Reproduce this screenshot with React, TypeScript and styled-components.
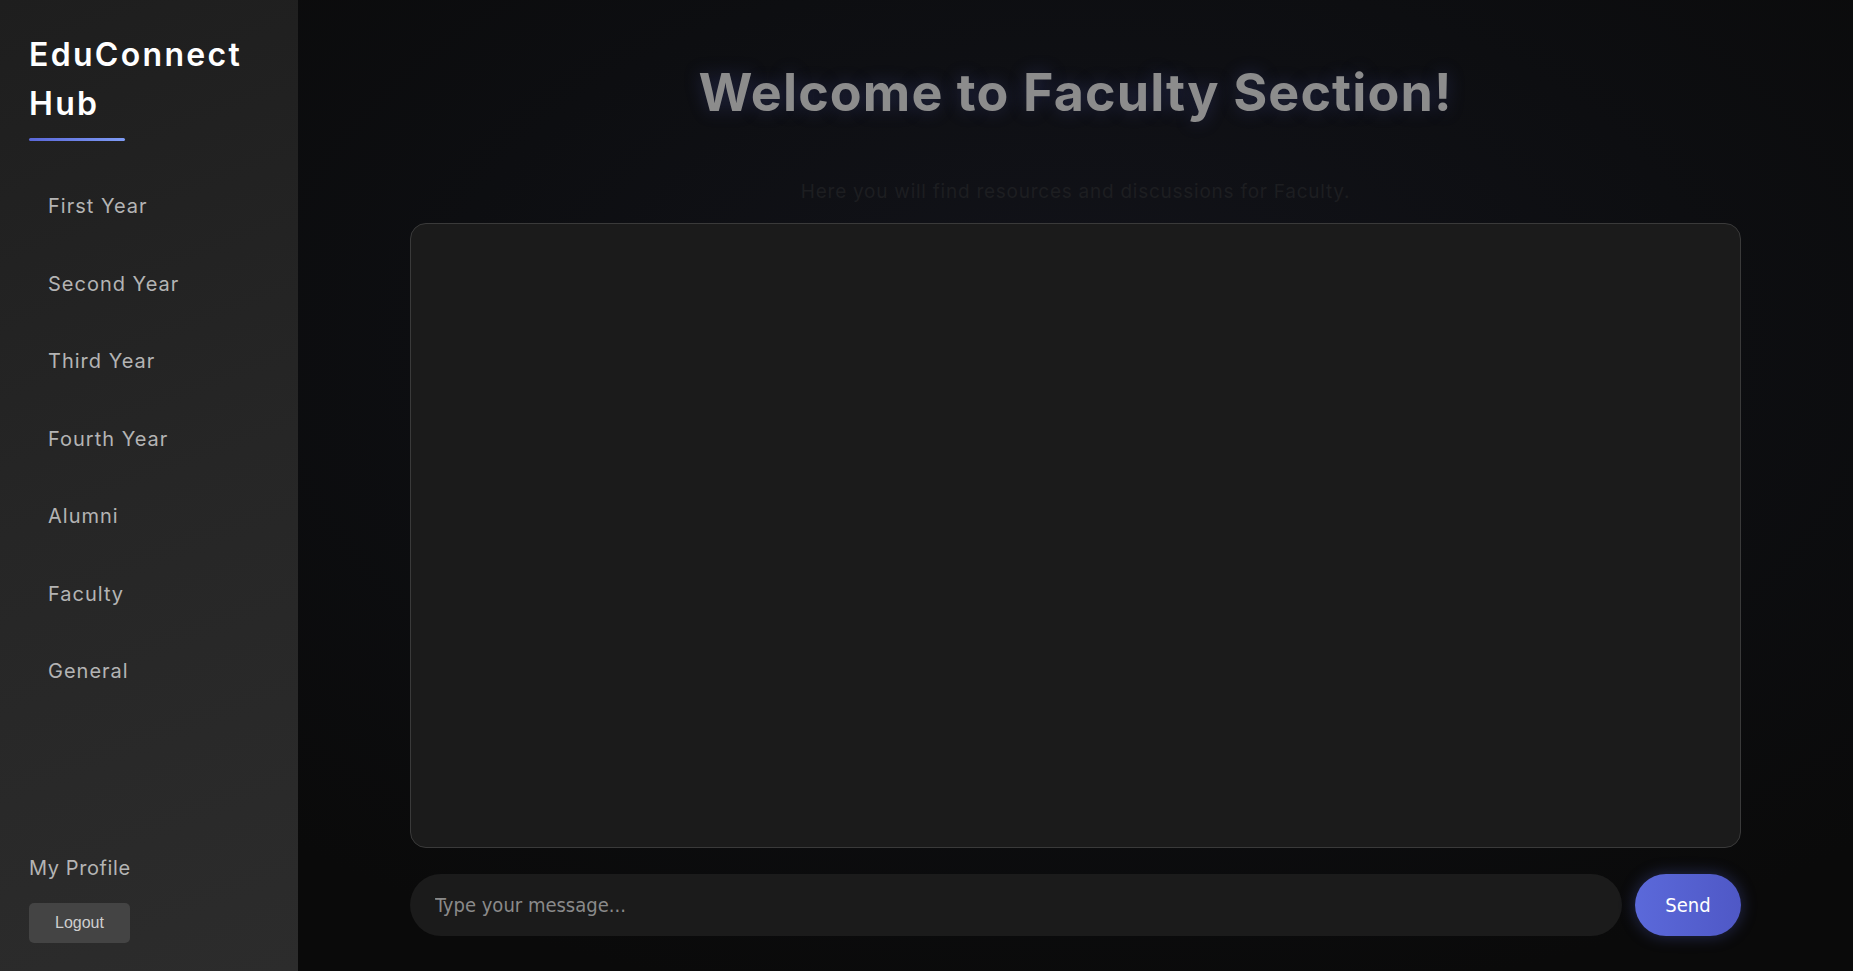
import React from "react";
import styled, { createGlobalStyle } from "styled-components";

const GlobalStyle = createGlobalStyle`
  html, body {
    margin: 0;
    padding: 0;
    height: 100%;
    background: #0b0b0d;
    overflow: hidden;
  }
  #root { height: 100%; }
  * { box-sizing: border-box; }
`;

const Layout = styled.div`
  display: flex;
  width: 100%;
  height: 100vh;
  font-family: Inter, "Noto Sans", sans-serif;
`;

const Sidebar = styled.aside`
  width: 298px;
  flex-shrink: 0;
  display: flex;
  flex-direction: column;
  justify-content: space-between;
  padding: 30px 29px 28px 29px;
  background: linear-gradient(160deg, #1e1e1e 0%, #262626 50%, #2c2c2c 100%);
`;

const Brand = styled.div`
  margin-bottom: 27px;
`;

const BrandTitle = styled.h1`
  margin: 0;
  max-width: 240px;
  font-family: Inter, "Noto Sans", sans-serif;
  font-size: 32px;
  line-height: 49px;
  font-weight: 600;
  letter-spacing: 2.3px;
  color: #ffffff;
`;

const BrandLine = styled.div`
  width: 96px;
  height: 3px;
  margin-top: 10px;
  border-radius: 2px;
  background: linear-gradient(90deg, #5a67d8, #7f9cf5);
`;

const NavList = styled.nav`
  display: flex;
  flex-direction: column;
`;

const NavItem = styled.a`
  display: block;
  padding: 26px 19px;
  font-size: 20px;
  line-height: 25.5px;
  letter-spacing: 1px;
  color: #b4b4b4;
  text-decoration: none;
  cursor: pointer;
`;

const SidebarTop = styled.div`
  display: flex;
  flex-direction: column;
`;

const SidebarBottom = styled.div`
  display: flex;
  flex-direction: column;
  align-items: flex-start;
  gap: 22px;
`;

const ProfileLink = styled.div`
  font-size: 20px;
  line-height: 25px;
  letter-spacing: 0.6px;
  color: #b4b4b4;
`;

const LogoutButton = styled.button`
  height: 40px;
  padding: 0 26px;
  border: none;
  border-radius: 5px;
  background: #444444;
  color: #cfcfcf;
  font-family: "Liberation Sans", Arial, sans-serif;
  font-size: 16px;
  cursor: pointer;
`;

const Main = styled.main`
  flex: 1;
  display: flex;
  flex-direction: column;
  align-items: center;
  padding-top: 62px;
  background: radial-gradient(ellipse 75% 70% at 50% 35%, #12131a 0%, #0d0e11 55%, #0a0a0a 100%);
`;

const Title = styled.h2`
  margin: 0;
  font-family: Inter, "Noto Sans", sans-serif;
  font-size: 52px;
  line-height: 62px;
  font-weight: 700;
  letter-spacing: 1.1px;
  color: #8c8c8c;
  text-shadow: 0 0 18px rgba(90, 103, 216, 0.25);
`;

const Subtitle = styled.p`
  margin: 54px 0 0 0;
  font-size: 19px;
  line-height: 28px;
  letter-spacing: 0.75px;
  color: #1d1e21;
`;

const ChatBox = styled.section`
  width: 1331px;
  height: 625px;
  margin-top: 17px;
  border: 1px solid #3a3a3a;
  border-radius: 16px;
  background: #1b1b1b;
`;

const InputRow = styled.form`
  width: 1331px;
  display: flex;
  gap: 13px;
  margin-top: 26px;
`;

const MessageInput = styled.input`
  flex: 1;
  height: 62px;
  padding: 0 25px;
  border: none;
  outline: none;
  border-radius: 31px;
  background: #1b1b1b;
  color: #dddddd;
  font-family: "DejaVu Sans Condensed", "DejaVu Sans", sans-serif;
  font-size: 20px;
  &::placeholder { color: #8a8a8a; }
`;

const SendButton = styled.button`
  width: 106px;
  height: 62px;
  border: none;
  border-radius: 31px;
  background: linear-gradient(90deg, #5b69da, #4f58c6);
  box-shadow: 0 0 16px rgba(90, 103, 216, 0.35);
  color: #ffffff;
  font-family: "DejaVu Sans Condensed", "DejaVu Sans", sans-serif;
  font-size: 20px;
  cursor: pointer;
`;

const navItems = [
  "First Year",
  "Second Year",
  "Third Year",
  "Fourth Year",
  "Alumni",
  "Faculty",
  "General",
];

export default function App() {
  return (
    <>
      <GlobalStyle />
      <Layout>
        <Sidebar>
          <SidebarTop>
            <Brand>
              <BrandTitle>EduConnect Hub</BrandTitle>
              <BrandLine />
            </Brand>
            <NavList>
              {navItems.map((item) => (
                <NavItem key={item}>{item}</NavItem>
              ))}
            </NavList>
          </SidebarTop>
          <SidebarBottom>
            <ProfileLink>My Profile</ProfileLink>
            <LogoutButton>Logout</LogoutButton>
          </SidebarBottom>
        </Sidebar>
        <Main>
          <Title>Welcome to Faculty Section!</Title>
          <Subtitle>Here you will find resources and discussions for Faculty.</Subtitle>
          <ChatBox />
          <InputRow onSubmit={(e) => e.preventDefault()}>
            <MessageInput placeholder="Type your message..." />
            <SendButton type="submit">Send</SendButton>
          </InputRow>
        </Main>
      </Layout>
    </>
  );
}
